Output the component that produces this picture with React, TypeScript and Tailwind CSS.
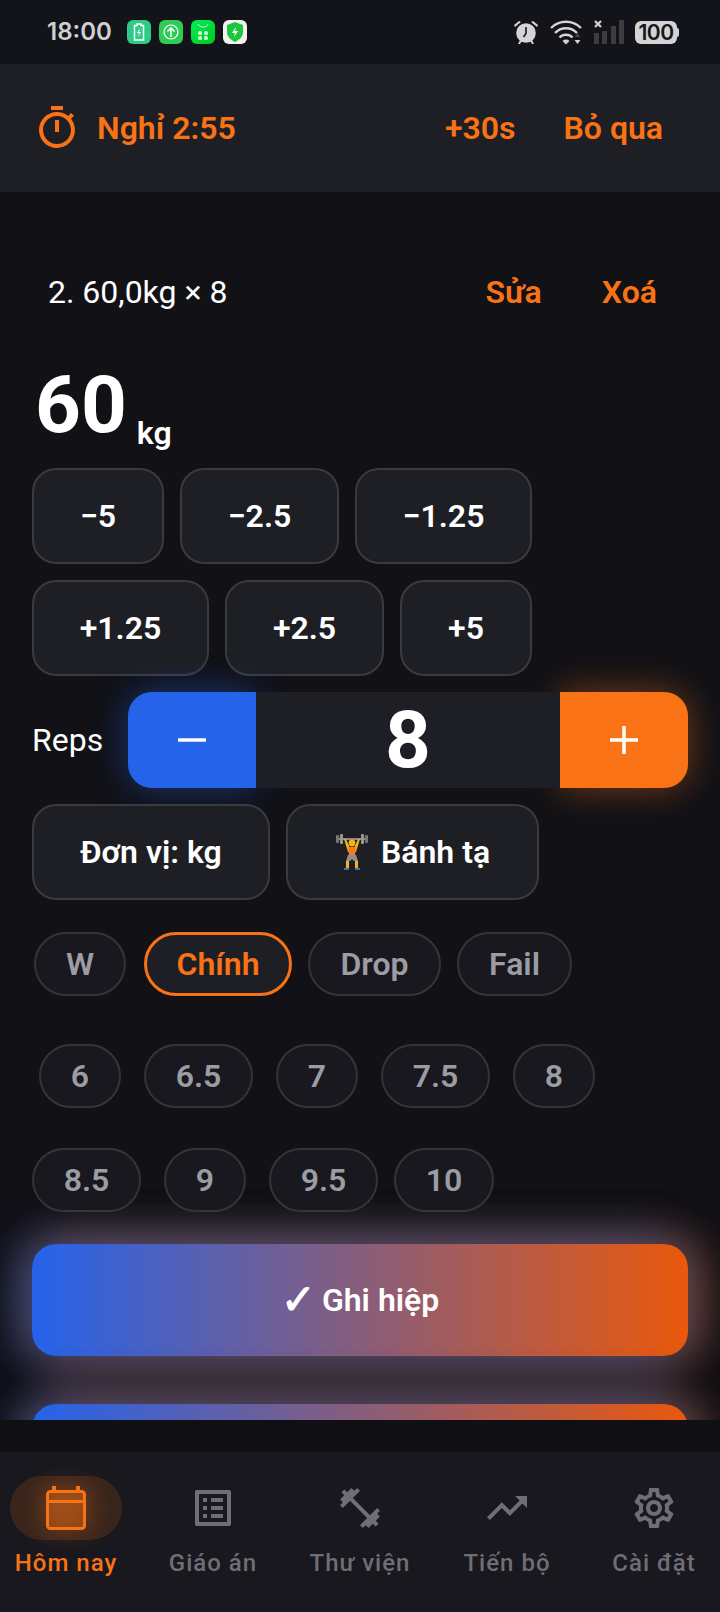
import React from "react";
import { MdOutlineTimer, MdOutlineListAlt, MdFitnessCenter, MdTrendingUp, MdOutlineSettings } from "react-icons/md";

const font = { fontFamily: "Roboto, 'Noto Sans', sans-serif" };

function Step({ label, w }: { label: string; w: string }) {
  return (
    <button className={`h-[96px] ${w} rounded-[24px] border-2 border-[#3a3b40] bg-[#1e1f24] text-[32px] font-semibold text-white flex items-center justify-center`}>
      {label}
    </button>
  );
}

function Chip({ label, cls, active }: { label: string; cls: string; active?: boolean }) {
  return (
    <div
      className={`h-[64px] ${cls} rounded-full flex items-center justify-center text-[32px] font-semibold ${
        active ? "border-[3px] border-[#f97316] text-[#f97316] bg-[#1e1f24]" : "border-2 border-[#34353a] text-[#9c9ca4] bg-[#18181e]"
      }`}
    >
      {label}
    </div>
  );
}

function Lifter() {
  return (
    <svg width="34" height="36" viewBox="0 0 34 36" className="mr-[12px]">
      <rect x="1" y="4" width="32" height="2" fill="#8a8a8a" />
      <rect x="1" y="1" width="3" height="8" rx="1" fill="#777" />
      <rect x="5" y="0" width="3" height="10" rx="1" fill="#999" />
      <rect x="26" y="0" width="3" height="10" rx="1" fill="#999" />
      <rect x="30" y="1" width="3" height="8" rx="1" fill="#777" />
      <path d="M9 5l2 0 4 9h4l4-9h2l-4 13H13z" fill="#f5b21b" />
      <circle cx="17" cy="9" r="3.4" fill="#f5b21b" />
      <path d="M13 13h8l-1 9h-6z" fill="#f47b20" />
      <path d="M13 21h8l2 6h-4l-2-2-2 2h-4z" fill="#8f8f8f" />
      <path d="M11 27h3l0 7h-3zM20 27h3l0 7h-3z" fill="#f5b21b" />
      <path d="M9 34h5v2H9zM20 34h5v2h-5z" fill="#3b6fc4" />
    </svg>
  );
}

function NavItem({ label, icon, active }: { label: string; icon: React.ReactNode; active?: boolean }) {
  return (
    <div className="w-[147px] shrink-0 flex flex-col items-center">
      <div className={`w-[112px] h-[64px] rounded-full flex items-center justify-center ${active ? "bg-[#f97316]/15" : ""}`}>{icon}</div>
      <div className={`mt-[6px] text-[24px] font-medium tracking-[1px] leading-[34px] whitespace-nowrap ${active ? "text-[#f97316]" : "text-[#6e6e75]"}`}>{label}</div>
    </div>
  );
}

function StatusIcons() {
  return (
    <div className="flex items-center">
      <svg width="26" height="26" viewBox="0 0 26 26" className="mr-[11px]">
        <circle cx="13" cy="14" r="9.8" fill="#d4d4d4" />
        <path d="M13 8v6.5l-2.5 3.5" stroke="#16161b" strokeWidth="1.6" fill="none" />
        <path d="M1 6l5-4 2 1-6 5zM25 6l-5-4-2 1 6 5z" fill="#d4d4d4" />
        <path d="M5 25l2-4 2 1-2 3zM21 25l-2-4-2 1 2 3z" fill="#d4d4d4" />
      </svg>
      <svg width="34" height="26" viewBox="0 0 34 26" className="mr-[10px]">
        <path d="M1 9a21 21 0 0 1 30 0M5 14a15 15 0 0 1 22 0M9.500 18.500a9 9 0 0 1 13 0" stroke="#d4d4d4" strokeWidth="2.4" fill="none" />
        <path d="M12.500 22a5 5 0 0 1 7 0L16 25.500z" fill="#d4d4d4" />
        <path d="M27.500 14l3 4h-6z" fill="#444449" />
        <path d="M27.500 25l3-4h-6z" fill="#d4d4d4" />
      </svg>
      <svg width="31" height="26" viewBox="0 0 31 26" className="mr-[10px]">
        <path d="M1 2l6 6M7 2l-6 6" stroke="#d4d4d4" strokeWidth="2.200" />
        <rect x="0" y="14" width="5" height="11" fill="#3c3c41" />
        <rect x="8" y="12" width="5" height="13" fill="#3c3c41" />
        <rect x="17" y="7" width="5" height="18" fill="#3c3c41" />
        <rect x="25" y="1" width="5" height="24" fill="#3c3c41" />
      </svg>
      <div className="flex items-center">
        <div className="w-[42px] h-[23px] rounded-[6px] bg-[#d4d4d4] flex items-center justify-center text-[#16161b] text-[21px] font-semibold leading-none tracking-[-0.5px]" style={{ fontFamily: "Inter, sans-serif" }}>
          100
        </div>
        <div className="w-[2px] h-[9px] bg-[#d4d4d4] rounded-r" />
      </div>
    </div>
  );
}

function AppBadge({ bg, children }: { bg: string; children: React.ReactNode }) {
  return <div className={`w-[24px] h-[24px] rounded-[6px] flex items-center justify-center ${bg}`}>{children}</div>;
}

const glowBtn =
  "h-[112px] rounded-[24px] bg-linear-to-r/srgb from-[#2563eb] to-[#ea580c] shadow-[-10px_0_48px_4px_rgba(37,99,235,0.42),10px_0_48px_4px_rgba(234,88,12,0.42),0_0_44px_6px_rgba(255,255,255,0.17)]";

export default function App() {
  return (
    <div className="w-[720px] h-[1612px] flex flex-col overflow-hidden bg-[#111116] text-white" style={font}>
      {/* status bar */}
      <div className="h-[64px] shrink-0 bg-[#13131a] flex items-center justify-between pl-[47px] pr-[41px]">
        <div className="flex items-center">
          <span className="text-[24px] font-semibold text-[#d0d0d0] leading-none w-[80px]" style={{ fontFamily: "Inter, sans-serif" }}>18:00</span>
          <div className="flex gap-[8px]">
            <AppBadge bg="bg-[#2ecb85]">
              <svg width="14" height="18" viewBox="0 0 14 18"><path d="M5 1h4v1.500h2.500V17h-9V2.500H5z" fill="none" stroke="#fff" strokeWidth="1.500" /><path d="M8 5L5 10h2l-1 4 3-5H7z" fill="#fff" /></svg>
            </AppBadge>
            <AppBadge bg="bg-[#2fcb55]">
              <svg width="16" height="16" viewBox="0 0 16 16"><circle cx="8" cy="8" r="7" fill="none" stroke="#fff" strokeWidth="1.200" /><path d="M8 13V4M4.500 7.500L8 4l3.500 3.500" fill="none" stroke="#fff" strokeWidth="1.600" /></svg>
            </AppBadge>
            <AppBadge bg="bg-gradient-to-br from-[#00ee55] to-[#00c815]">
              <svg width="16" height="20" viewBox="0 0 16 20"><path d="M3 2c1 4 9 4 10 0" fill="none" stroke="#c8f5d0" strokeWidth="1" /><rect x="3" y="9" width="4" height="4" rx="1.500" fill="#c8f5d0" /><rect x="9" y="9" width="4" height="4" rx="1.500" fill="#c8f5d0" /><rect x="3" y="14" width="4" height="4" rx="1.500" fill="#c8f5d0" /><rect x="9" y="14" width="4" height="4" rx="1.500" fill="#c8f5d0" /></svg>
            </AppBadge>
            <AppBadge bg="bg-[#f2f2f2]">
              <svg width="20" height="22" viewBox="0 0 20 22"><path d="M10 1l8 3v7c0 5-4 8-8 10-4-2-8-5-8-10V4z" fill="#1cc63e" /><path d="M11 6l-4 6h3l-1 4 4-6h-3z" fill="#fff" /></svg>
            </AppBadge>
          </div>
        </div>
        <StatusIcons />
      </div>

      {/* rest bar */}
      <div className="h-[128px] shrink-0 bg-[#1e1f24] flex items-center pl-[30px] pr-[57px] text-[#f97316] text-[32px] font-semibold">
        <MdOutlineTimer size={48} className="mr-[16px] ml-[3px]" />
        <span>Nghỉ 2:55</span>
        <span className="ml-auto">+30s</span>
        <span className="ml-[48px]">Bỏ qua</span>
      </div>

      {/* content */}
      <div className="flex-1 min-h-0 overflow-hidden px-[32px]">
        <div className="mt-[75px] h-[50px] mb-[1px] flex items-center pl-[16px] pr-[31px] text-[32px]">
          <span>2. 60,0kg × 8</span>
          <span className="ml-auto text-[#f97316] font-semibold">Sửa</span>
          <span className="ml-[60px] text-[#f97316] font-semibold">Xoá</span>
        </div>

        <div className="h-[150px] flex items-end pb-[19px] pl-[3px]">
          <span className="text-[80px] font-bold leading-none mb-[4px]">60</span>
          <span className="ml-[10px] text-[32px] font-semibold leading-none">kg</span>
        </div>

        <div className="flex gap-[16px]">
          <Step label="−5" w="w-[132px]" />
          <Step label="−2.5" w="w-[159px]" />
          <Step label="−1.25" w="w-[177px]" />
        </div>
        <div className="flex gap-[16px] mt-[16px]">
          <Step label="+1.25" w="w-[177px]" />
          <Step label="+2.5" w="w-[159px]" />
          <Step label="+5" w="w-[132px]" />
        </div>

        <div className="flex items-center mt-[16px]">
          <span className="w-[96px] text-[32px] shrink-0">Reps</span>
          <div className="flex-1 h-[96px] flex rounded-[24px] bg-[#1e1f24]">
            <div className="w-[128px] rounded-l-[24px] bg-[#2563eb] flex items-center justify-center shadow-[0_0_36px_rgba(37,99,235,0.45)]">
              <svg width="30" height="30" viewBox="0 0 30 30"><path d="M1 15h28" stroke="#fff" strokeWidth="3.500" /></svg>
            </div>
            <div className="relative flex-1 bg-[#1e1f24] flex items-center justify-center text-[80px] font-bold">8</div>
            <div className="w-[128px] rounded-r-[24px] bg-[#f97316] flex items-center justify-center shadow-[0_0_36px_rgba(249,115,22,0.45)]">
              <svg width="30" height="30" viewBox="0 0 30 30"><path d="M1 15h28M15 1v28" stroke="#fff" strokeWidth="3.500" /></svg>
            </div>
          </div>
        </div>

        <div className="flex gap-[16px] mt-[16px]">
          <Step label="Đơn vị: kg" w="w-[238px]" />
          <button className="h-[96px] w-[253px] rounded-[24px] border-2 border-[#3a3b40] bg-[#1e1f24] text-[32px] font-semibold flex items-center justify-center">
            <Lifter />
            Bánh tạ
          </button>
        </div>

        <div className="flex mt-[32px]">
          <Chip label="W" cls="w-[92px] ml-[2px]" />
          <Chip label="Chính" cls="w-[148px] ml-[18px]" active />
          <Chip label="Drop" cls="w-[133px] ml-[16px]" />
          <Chip label="Fail" cls="w-[115px] ml-[16px]" />
        </div>

        <div className="flex mt-[48px]">
          <Chip label="6" cls="w-[82px] ml-[7px]" />
          <Chip label="6.5" cls="w-[109px] ml-[23px]" />
          <Chip label="7" cls="w-[82px] ml-[23px]" />
          <Chip label="7.5" cls="w-[109px] ml-[23px]" />
          <Chip label="8" cls="w-[82px] ml-[23px]" />
        </div>

        <div className="flex mt-[40px]">
          <Chip label="8.5" cls="w-[109px]" />
          <Chip label="9" cls="w-[82px] ml-[23px]" />
          <Chip label="9.5" cls="w-[109px] ml-[23px]" />
          <Chip label="10" cls="w-[100px] ml-[16px]" />
        </div>

        <div className={`mt-[32px] flex items-center justify-center text-[32px] font-semibold ${glowBtn}`}>
          <span className="text-[42px] mr-[6px] leading-none [-webkit-text-stroke:1px_white]" style={{ fontFamily: "'DejaVu Sans', sans-serif" }}>✓</span>
          Ghi hiệp
        </div>
        <div className={`mt-[48px] ${glowBtn}`} />
      </div>

      {/* gap + nav */}
      <div className="h-[32px] shrink-0 bg-[#101014]" />
      <div className="h-[160px] shrink-0 bg-[#18181e] flex justify-center pt-[24px]">
        <NavItem
          label="Hôm nay"
          active
          icon={
            <svg width="40" height="44" viewBox="0 0 40 44" className="drop-shadow-[0_0_12px_rgba(249,115,22,0.7)]">
              <path d="M8 0v6M32 0v6" stroke="#f97316" strokeWidth="4" />
              <rect x="1.500" y="5.500" width="37" height="37" rx="3" fill="#f97316" fillOpacity="0.35" stroke="#f97316" strokeWidth="3" />
              <path d="M2 15.500h36" stroke="#f97316" strokeWidth="3" />
            </svg>
          }
        />
        <NavItem label="Giáo án" icon={<MdOutlineListAlt size={48} color="#6e6e75" />} />
        <NavItem label="Thư viện" icon={<MdFitnessCenter size={48} color="#6e6e75" />} />
        <NavItem label="Tiến bộ" icon={<MdTrendingUp size={48} color="#6e6e75" />} />
        <NavItem label="Cài đặt" icon={<MdOutlineSettings size={48} color="#6e6e75" />} />
      </div>
    </div>
  );
}
